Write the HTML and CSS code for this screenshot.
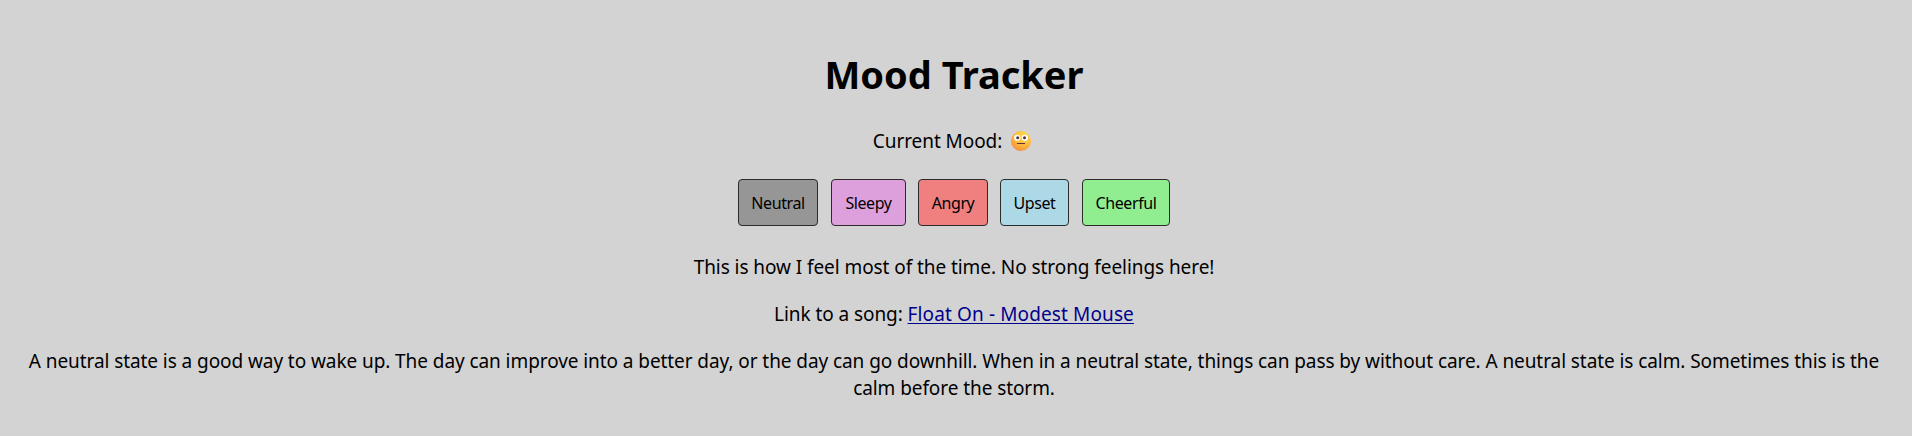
FILE: index.html
```html
<!DOCTYPE html>
<html lang="en">
<head>
<meta charset="utf-8">
<title>Mood Tracker</title>
<link rel="stylesheet" href="styles.css">
</head>
<body>
<main class="tracker">
  <h1 class="title">Mood Tracker</h1>
  <p class="mood"><span>Current Mood:</span>
    <svg class="face" viewBox="0 0 20 20" role="img" aria-label="Neutral face">
      <defs>
        <radialGradient id="skin" cx="0.65" cy="0.25" r="0.85">
          <stop offset="0" stop-color="#ffdf4d"/>
          <stop offset="0.55" stop-color="#fdb83c"/>
          <stop offset="0.85" stop-color="#f79a3c"/>
          <stop offset="1" stop-color="#f07868"/>
        </radialGradient>
      </defs>
      <circle cx="10" cy="10" r="10" fill="url(#skin)"/>
      <circle cx="6.2" cy="6.8" r="3.1" fill="#fff"/>
      <circle cx="13.9" cy="6.8" r="3.1" fill="#fff"/>
      <circle cx="6.7" cy="6.8" r="1.5" fill="#4a3042"/>
      <circle cx="13.5" cy="6.8" r="1.5" fill="#4a3042"/>
      <path d="M6.4 12.5h7.2" stroke="#5c3540" stroke-width="1.2" stroke-linecap="round"/>
    </svg>
  </p>
  <div class="buttons">
    <button class="btn neutral">Neutral</button>
    <button class="btn sleepy">Sleepy</button>
    <button class="btn angry">Angry</button>
    <button class="btn upset">Upset</button>
    <button class="btn cheerful">Cheerful</button>
  </div>
  <p class="feeling">This is how I feel most of the time. No strong feelings here!</p>
  <p class="song">Link to a song: <a class="link" href="#">Float On - Modest Mouse</a></p>
  <p class="about">A neutral state is a good way to wake up. The day can improve into a better day, or the day can go downhill. When in a neutral state, things can pass by without care. A neutral state is calm. Sometimes this is the<br>calm before the storm.</p>
</main>
</body>
</html>
```

FILE: styles.css
```css
body {
  margin: 0;
  background: #d3d3d3;
  color: #000;
  font-family: "Segoe UI", "Noto Sans", sans-serif;
  font-size: 19px;
  line-height: 27px;
  text-align: center;
}
.tracker {
  display: flex;
  flex-direction: column;
  padding: 48px 24px 34px 20px;
}
.title {
  margin: 0 0 27px;
  font-size: 38px;
  line-height: 53px;
}
.mood {
  display: flex;
  justify-content: center;
  gap: 9px;
  margin: 0 4px 24px 0;
  letter-spacing: -0.07px;
}
.face {
  width: 20px;
  height: 20px;
  margin-top: 3px;
}
.buttons {
  display: flex;
  justify-content: center;
  gap: 12px;
  margin-bottom: 28px;
}
.btn {
  box-sizing: border-box;
  height: 47px;
  padding: 0;
  border: 1px solid #2b2b2b;
  border-radius: 4px;
  color: #000;
  font-family: Tahoma, "Noto Sans", sans-serif;
  font-size: 16px;
  letter-spacing: -0.42px;
}
.neutral { width: 80px; margin-right: 1px; background: #969696; }
.sleepy { width: 75px; background: #dda0dd; }
.angry { width: 70px; background: #f08080; }
.upset { width: 69px; margin-right: 1px; background: #add8e6; }
.cheerful { width: 88px; background: #90ee90; }
.feeling,
.song {
  margin: 0 0 20px;
  letter-spacing: -0.07px;
}
.link {
  color: #00008b;
  letter-spacing: 0.12px;
  text-decoration-thickness: 1px;
  text-underline-offset: 2px;
}
.about {
  margin: 0;
  white-space: nowrap;
  letter-spacing: -0.075px;
}
```
